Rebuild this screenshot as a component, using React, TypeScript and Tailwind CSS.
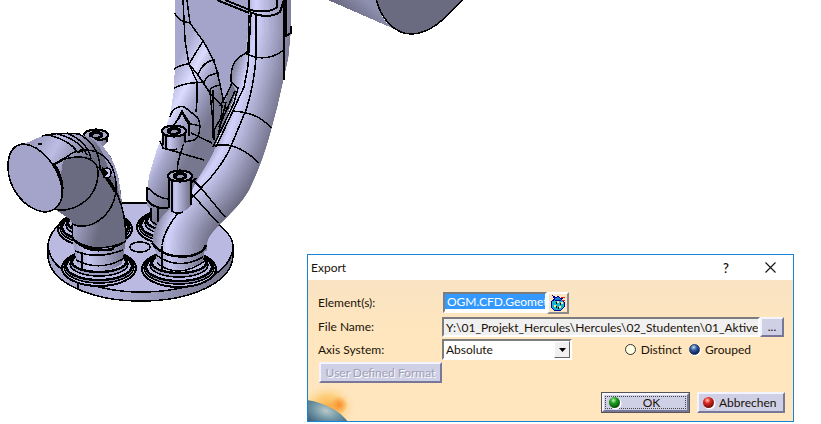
import React, { useState } from "react";

const raised =
  "border-2 border-t-[#f4f4ff] border-l-[#f4f4ff] border-r-[#77779a] border-b-[#77779a] bg-[#cfcfe6]";
const sunken =
  "border-2 border-t-[#7d7d7d] border-l-[#7d7d7d] border-r-white border-b-white";

function Port({ cx, cy }: { cx: number; cy: number }) {
  return (
    <g transform={`translate(${cx} ${cy})`} fill="#b9b9e2">
      <ellipse rx="37" ry="18" strokeWidth="2" />
      <ellipse rx="35" ry="16" cy="-1" fill="#8c8cae" />
      <ellipse rx="33" ry="14" cy="-2" strokeWidth="2.4" />
      <ellipse rx="29" ry="12" cy="-4" fill="#9c9cc2" />
      <ellipse rx="27" ry="10" cy="-6" strokeWidth="2.4" />
    </g>
  );
}

function Boss({ cx, cy, h }: { cx: number; cy: number; h: number }) {
  return (
    <g transform={`translate(${cx} ${cy})`}>
      <path d={`M-11 0V${h}Q-2 ${h + 8} 11 ${h - 4}V0Z`} fill="url(#tube)" stroke="none" />
      <path d={`M-11 0V${h - 2}M-8 3V${h + 1}Q-3 ${h + 5} 3 ${h + 2}M11 0V${h - 5}`} fill="none" />
      <ellipse rx="12" ry="5.5" fill="#aaaacf" strokeWidth="2.2" />
      <ellipse rx="6" ry="3" fill="#77778f" strokeWidth="2.4" />
      <path d="M-5 1L-2 -2H3L5 1L1 3H-3Z" fill="#9494b5" />
    </g>
  );
}

function shade(t: number) {
  const from = [104, 104, 126];
  const to = [208, 208, 250];
  return `rgb(${from.map((c, i) => Math.round(c + (to[i] - c) * t)).join(",")})`;
}

/* Nested strokes, sliding toward the light, shade a bent tube. */
function Tube({ d, width, shift, clip }: { d: string; width: number; shift: number; clip: string }) {
  const steps = Array.from({ length: 20 }, (_, i) => i / 19);
  return (
    <g clipPath={`url(#${clip})`} fill="none">
      {steps.map((t) => (
        <path
          key={t}
          d={d}
          transform={`translate(${-shift * t} ${-shift * 0.4 * t})`}
          stroke={shade(t)}
          strokeWidth={width * (1 - t) + 3}
        />
      ))}
    </g>
  );
}

function Model() {
  return (
    <svg
      className="absolute left-0 top-0"
      width="480"
      height="310"
      viewBox="0 0 480 310"
      stroke="#000"
      strokeWidth="1.5"
      shapeRendering="crispEdges"
      aria-label="Manifold model"
    >
      <defs>
        <clipPath id="frontShape">
          <path d="M250 10L245 53C233 61 231 70 231 82L237 92L225 123L216 147C208 167 195 179 190 198C173 205 158 214 153 238V246Q179 266 207 250V243C208 230 235 215 249 190C266 155 271 128 277 107L288 58L291 26V0H250Z" />
        </clipPath>
        <linearGradient id="tube">
          <stop offset="0" stopColor="#9a9abf" />
          <stop offset=".3" stopColor="#c6c6f0" />
          <stop offset="1" stopColor="#707088" />
        </linearGradient>
        <linearGradient id="back" gradientUnits="userSpaceOnUse" x1="168" y1="80" x2="216" y2="105">
          <stop offset="0" stopColor="#a9a9d0" />
          <stop offset=".35" stopColor="#dcdcff" />
          <stop offset=".6" stopColor="#a9a9cf" />
          <stop offset="1" stopColor="#77778f" />
        </linearGradient>
        <linearGradient id="elbow" gradientUnits="userSpaceOnUse" x1="36" y1="140" x2="88" y2="170">
          <stop offset="0" stopColor="#9f9fc4" />
          <stop offset=".35" stopColor="#bcbce5" />
          <stop offset="1" stopColor="#6a6a80" />
        </linearGradient>
        <linearGradient id="elbowEdge" gradientUnits="userSpaceOnUse" x1="71" y1="228" x2="98" y2="236">
          <stop offset="0" stopColor="#a9a9cf" />
          <stop offset="1" stopColor="#6a6a80" />
        </linearGradient>
        <linearGradient id="stub" gradientUnits="userSpaceOnUse" x1="365" y1="0" x2="350" y2="18">
          <stop offset="0" stopColor="#8f8fb0" />
          <stop offset="1" stopColor="#68687f" />
        </linearGradient>
        <linearGradient id="rim">
          <stop offset="0" stopColor="#a2a2c8" />
          <stop offset=".35" stopColor="#b0b0d8" />
          <stop offset="1" stopColor="#727289" />
        </linearGradient>
      </defs>

      {/* base plate */}
      <path d="M48 247V258C52 285 95 301 141 301C190 301 232 283 233 256V247Z" fill="url(#rim)" />
      <path d="M48 245C50 222 85 204 122 203H148C190 205 214 222 219 225C228 233 233 238 233 247C231 275 190 292 141 292C92 292 49 272 48 245Z" fill="#b9b9e2" />
      <path d="M78 281V290" />
      <ellipse cx="140" cy="247" rx="10" ry="5" fill="#b9b9e2" />
      <Port cx={95} cy={229} />
      <Port cx={174} cy={227} />
      <Port cx={179} cy={269} />

      {/* back runner */}
      <path d="M175 0V60L174 90L170 115C165 133 157 145 153 162C147 180 147 190 147 205L152 211V224L160 230L180 225L205 180L215 147L237 90L235 40L217 0Z" fill="url(#back)" stroke="none" />
      <path d="M186 0H250V60L232 80L224 105C221 85 216 67 203 42L189 23Z" fill="#a4a4ca" stroke="none" />
      <g fill="none">
        <path d="M183 0L185 40L189 64L197 82V100L196 112M187 0L190 23L203 41C213 57 216 65 219 80L224 103" />
        <path d="M175 13Q177 21 190 23M203 41L189 64M174 69Q182 64 189 64L198 75L210 93L222 106M174 88Q190 81 205 83M198 75Q203 61 215 60M204 82Q207 74 219 73M210 92Q209 87 220 85M213 90L214 140M210 92L213 122L213 138" />
        <path d="M170 117C172 107 183 104 187 109L197 117C202 124 200 137 194 140L185 142M175 124L182 111L189 122V136M187 123L200 126M178 120L182 112L187 122M184 142L178 162L177 174" />
        <path d="M191 133L212 143M160 141L163 148L204 160M148 188Q157 198 168 199" />
        <path d="M217 0L249 13" strokeWidth="2" />
        <path d="M147 187V200Q153 209 168 208" strokeWidth="2" />
        <path d="M151 208V220Q155 226 164 226M158 208V222" />
      </g>

      {/* front runner */}
      <path d="M155 246L157 264Q179 276 203 262L205 246Z" fill="url(#tube)" stroke="none" />
      <Tube
        clip="frontShape"
        width={64}
        shift={12}
        d="M179 262C178 236 184 218 206 194C244 158 252 100 262 68L268 34V-20"
      />
      <g fill="none">
        <path d="M222 105L221 118L214 130M220 106L227 94L232 83L238 88L234 103L213 147M226 102L218 135M235 91L219 127M224 108H229" />
        <path d="M249 15L248 51L246 53C230 61 231 72 231 82M251 13L248 67M256 15V57Q254 86 246 110L231 146C219 175 192 195 179 212Q164 230 162 245M248 66L244 87L232 113L216 147" />
        <path d="M245 53Q265 64 284 50M232 111Q258 112 271 128M215 146Q235 140 259 163" />
        <path d="M193 180L201 188L225 217M191 193L218 223M196 178L184 191M191 196Q183 207 174 212" />
        <path d="M225 0L250 10Q270 14 277 7V0M249 0V12M250 12Q268 20 280 12L284 0" strokeWidth="2" />
        <path d="M284 0V80M286 0V36L291 33V26" strokeWidth="2" />
        <path d="M152 243Q164 259 190 256Q204 253 206 245" strokeWidth="2.4" />
        <path d="M156 255Q178 271 203 257M157 263Q178 280 205 261M162 246V271" />
      </g>

      {/* front left port */}
      <Port cx={99} cy={268} />
      <path d="M73 242L77 264Q99 278 122 264L126 240Z" fill="url(#tube)" stroke="none" />

      {/* capped elbow */}
      <Boss cx={96} cy={135} h={12} />
      <path d="M24 144L42 136Q49 132 67 134H79C96 137 106 149 111 157C118 170 121 188 122 204L126 225L127 240Q101 255 74 240L71 220L56 210Z" fill="url(#elbow)" stroke="none" />
      <path d="M88 136Q99 144 102 152L121 200C120 178 116 164 108 153Q99 139 88 136Z" fill="#9a9abe" stroke="none" />
      <path d="M63 161Q85 152 99 160L116 180L126 223L126 239Q105 254 88 246Q74 241 74 232L71 220L56 210Z" fill="#6a6a80" stroke="none" />
      <path d="M70 220L72 223Q86 230 100 223L98 249Q84 247 74 240Z" fill="url(#elbowEdge)" stroke="none" />
      <g fill="none">
        <path d="M42 136Q57 132 80 134M48 135Q70 140 78 153M57 134Q79 139 87 155M67 133Q88 142 91 159M79 134Q99 145 100 167" />
        <path d="M54 164L68 156Q74 150 83 152M62 160C84 153 99 159 98 174C97 202 69 214 55 209M81 150C104 148 117 165 116 190C113 218 88 232 72 224" />
        <path d="M99 167L108 178C119 193 126 215 126 239" strokeWidth="1.8" />
        <path d="M99 167L115 192M78 153L81 150M63 160L55 164" strokeWidth="2" />
        <path d="M73 239Q94 255 125 242M72 225L73 240Q96 261 126 241M75 251Q97 260 123 250M76 260Q99 272 123 259M82 252V271" />
        <path d="M72 239Q92 253 114 249" strokeWidth="2.4" />
      </g>
      <ellipse cx="107" cy="173" rx="4" ry="5" fill="#c6c6ee" />
      <path d="M103 169L107 173L104 176Z" fill="#000" />
      <path d="M24 144C42 146 58 167 62 187C64 203 56 212 44 212C24 209 8 188 8 167C8 151 15 144 24 144Z" fill="#a4a4ca" strokeWidth="1.6" />
      <path d="M54 163Q65 180 62 196M38 144H42" fill="none" strokeWidth="2" />

      {/* bosses */}
      <Boss cx={174} cy={131} h={16} />
      <Boss cx={180} cy={176} h={34} />

      {/* stub */}
      <path d="M328 0H376Q380 18 392 28Z" fill="url(#stub)" stroke="none" />
      <path d="M376 -2C380 18 395 34 411 34C434 34 450 12 464 -2Z" fill="#6a6a80" />
    </svg>
  );
}

function Ball({ id, light, mid, dark }: { id: string; light: string; mid: string; dark: string }) {
  return (
    <svg width="14" height="14" viewBox="0 0 14 14" aria-hidden="true">
      <defs>
        <radialGradient id={id} cx=".4" cy=".3" r=".7">
          <stop offset="0" stopColor={light} />
          <stop offset=".4" stopColor={mid} />
          <stop offset="1" stopColor={dark} />
        </radialGradient>
      </defs>
      <circle cx="7.500" cy="7.500" r="6" fill="#fff" />
      <circle cx="6.500" cy="6.500" r="5.500" fill={`url(#${id})`} />
    </svg>
  );
}

function BagIcon() {
  return (
    <svg width="16" height="16" viewBox="0 0 16 16" shapeRendering="crispEdges" aria-hidden="true">
      <path d="M5 4H11L14 7V12L11 15H4L1 12V7Z" fill="#19b5c8" stroke="#00009c" />
      <path d="M3 1L6 3L8 1L10 3H13L11 5H5Z" fill="#1580c0" stroke="#00009c" />
      <path d="M11 3L15 2M12 5L15 6" stroke="#e02020" />
      <path d="M7 6H9V8H7ZM11 7H13V9H11ZM4 10H6V12H4ZM9 11H11V13H9Z" fill="#ffe89a" />
      <path d="M6 7H7V9H6ZM10 8H11V10H10ZM8 12H9V14H8ZM6 11H7V13H6Z" fill="#000" />
    </svg>
  );
}

function Planet() {
  return (
    <svg className="absolute bottom-0 left-0" width="60" height="40" viewBox="0 0 60 40" aria-hidden="true">
      <defs>
        <radialGradient id="glow">
          <stop offset="0" stopColor="#fbab42" />
          <stop offset=".5" stopColor="#fbc765" stopOpacity=".7" />
          <stop offset="1" stopColor="#fde6c1" stopOpacity="0" />
        </radialGradient>
        <radialGradient id="spot">
          <stop offset="0" stopColor="#f98f2c" />
          <stop offset="1" stopColor="#f98f2c" stopOpacity="0" />
        </radialGradient>
        <radialGradient id="globe" cx=".6" cy=".12" r=".6">
          <stop offset="0" stopColor="#b9c9c9" />
          <stop offset=".3" stopColor="#6c93a3" />
          <stop offset=".65" stopColor="#39566e" />
          <stop offset="1" stopColor="#101c30" />
        </radialGradient>
      </defs>
      <ellipse cx="20" cy="26" rx="29" ry="24" fill="url(#glow)" />
      <circle cx="31" cy="24" r="9" fill="url(#spot)" />
      <ellipse cx="5" cy="44" rx="40" ry="23" transform="rotate(18 5 44)" fill="url(#globe)" />
    </svg>
  );
}

export default function App() {
  const [axis, setAxis] = useState("Absolute");
  const [mode, setMode] = useState("Grouped");
  const radio =
    "size-[11px] appearance-none rounded-full border border-[#333] bg-[#ffffe1] checked:border-[#1b3768] checked:bg-[radial-gradient(circle_at_40%_25%,#c5d9f5_0%,#3561a5_35%,#0b2454_75%)] checked:shadow-[1px_1px_0_#fff]";
  return (
    <main className="relative min-h-[424px] overflow-hidden bg-white font-[Lato,'Open_Sans',sans-serif] text-[12px] leading-4 text-[#1a1208]">
      <Model />
      <section
        role="dialog"
        aria-label="Export"
        className="absolute left-[307px] top-[254px] w-[487px] border border-[#1883d7] bg-[#fde6c1]"
      >
        <header className="flex h-[25px] items-center bg-white pl-[3px] pr-4">
          <h1 className="flex-1">Export</h1>
          <button type="button" aria-label="Help" className="mr-8 w-3 text-[13px] font-semibold">
            ?
          </button>
          <button type="button" aria-label="Close">
            <svg width="13" height="13" viewBox="0 0 13 13" stroke="#111" strokeWidth="1.1">
              <path d="M1.500 1.500L11.500 11.500M11.500 1.500L1.500 11.500" />
            </svg>
          </button>
        </header>
        <form
          className="relative bg-linear-to-b from-[#f9e3c3] to-[#ffe6be] to-40% pb-2 pl-[10px] pr-2 pt-3"
          onSubmit={(e) => e.preventDefault()}
        >
          <Planet />
          <div className="relative">
            <div className="mb-1 flex h-[21px] items-center">
              <label htmlFor="elements" className="w-[125px]">Element(s):</label>
              <div className={`h-[21px] w-[104px] bg-white ${sunken}`}>
                <input
                  id="elements"
                  readOnly
                  value="OGM.CFD.Geometry"
                  className="block h-[15px] w-full bg-[#3399ff] pl-[2px] text-white outline-none"
                />
              </div>
              <button
                type="button"
                aria-label="Select elements"
                className="flex h-[22px] w-[22px] items-center justify-center border-2 border-b-[#8a8a8a] border-l-white border-r-[#8a8a8a] border-t-white bg-[#fde6c1]"
              >
                <BagIcon />
              </button>
            </div>
            <div className="mb-[2px] flex h-5 items-center pr-px">
              <label htmlFor="file" className="w-[124px]">File Name:</label>
              <input
                id="file"
                readOnly
                value="Y:\01_Projekt_Hercules\Hercules\02_Studenten\01_Aktive_Stand"
                className={`h-5 min-w-0 flex-1 bg-[#f0f0f0] pl-[2px] outline-none ${sunken}`}
              />
              <button type="button" aria-label="Browse" className={`h-5 w-6 leading-3 ${raised}`}>
                ...
              </button>
            </div>
            <div className="mb-[2px] flex h-[21px] items-center">
              <label htmlFor="axis" className="w-[124px]">Axis System:</label>
              <div className={`relative h-[21px] w-[130px] bg-white ${sunken}`}>
                <select
                  id="axis"
                  value={axis}
                  onChange={(e) => setAxis(e.target.value)}
                  className="block h-[17px] w-full appearance-none pl-[2px] outline-none"
                >
                  <option>Absolute</option>
                </select>
                <span className="pointer-events-none absolute right-0 top-0 flex h-[17px] w-4 items-center justify-center border border-b-[#666] border-l-white border-r-[#666] border-t-white bg-[#f0f0f0]">
                  <svg width="7" height="4" viewBox="0 0 7 4" aria-hidden="true">
                    <path d="M0 0H7L3.500 4Z" />
                  </svg>
                </span>
              </div>
              <div className="ml-auto flex items-center gap-[7px] pr-[34px]">
                <label className="flex items-center gap-[5px]">
                  <input type="radio" name="mode" className={radio} checked={mode === "Distinct"} onChange={() => setMode("Distinct")} />
                  Distinct
                </label>
                <label className="flex items-center gap-[5px]">
                  <input type="radio" name="mode" className={radio} checked={mode === "Grouped"} onChange={() => setMode("Grouped")} />
                  Grouped
                </label>
              </div>
            </div>
            <button
              type="button"
              disabled
              className={`mb-[9px] ml-px block h-[21px] w-[123px] text-[#a0a0b4] [text-shadow:1px_1px_0_#fff] ${raised}`}
            >
              User Defined Format
            </button>
            <div className="flex justify-end gap-[7px]">
              <button type="submit" className="h-[21px] w-[89px] border border-[#555]">
                <span className={`flex h-[19px] items-center ${raised}`}>
                  <span className="mx-px flex h-[13px] flex-1 items-center border border-dotted border-[#444] pl-[2px]">
                    <Ball id="ok" light="#c6f5b8" mid="#22a022" dark="#064d08" />
                    <span className="flex-1 pr-1">OK</span>
                  </span>
                </span>
              </button>
              <button type="button" className={`flex h-[21px] w-[88px] items-center gap-[3px] pl-[3px] ${raised}`}>
                <Ball id="cancel" light="#ffd0c0" mid="#dd2a22" dark="#6a0c0c" />
                Abbrechen
              </button>
            </div>
          </div>
        </form>
      </section>
    </main>
  );
}
